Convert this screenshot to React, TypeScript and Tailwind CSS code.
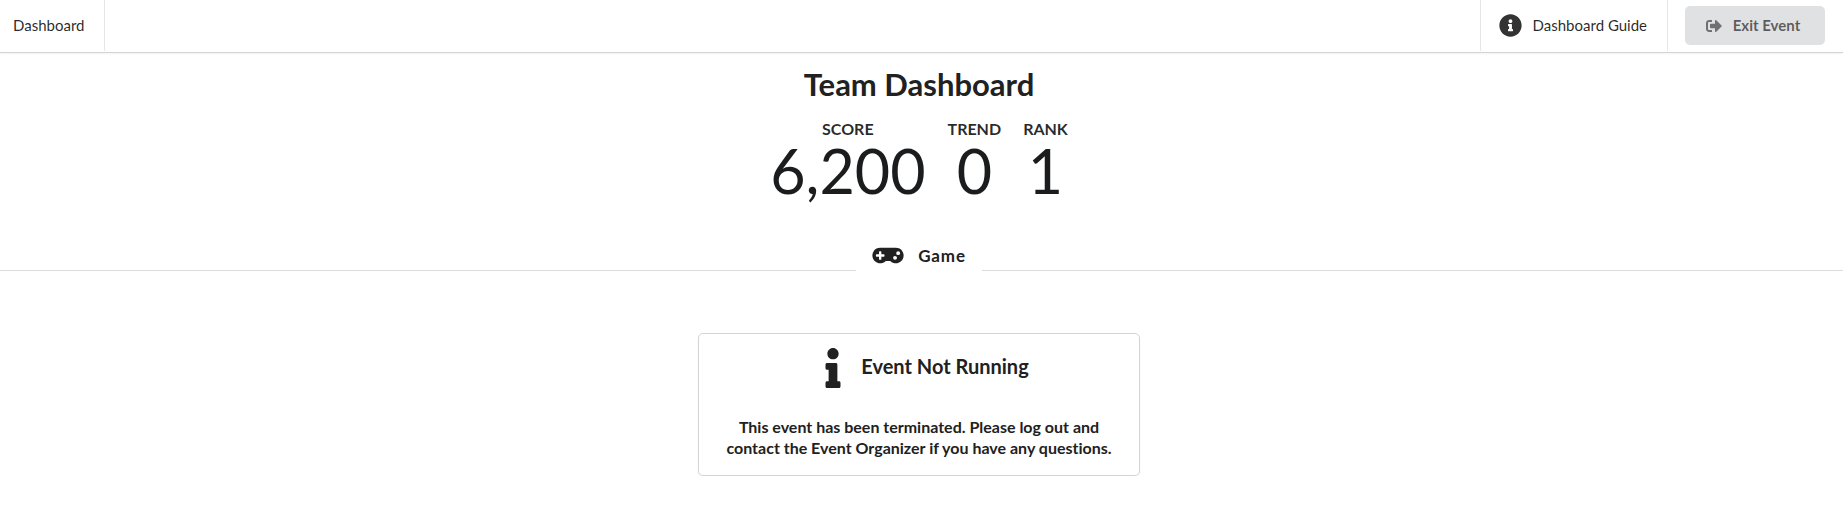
import type { ReactNode } from "react";
import { FaGamepad, FaInfo, FaInfoCircle, FaSignOutAlt } from "react-icons/fa";

function Statistic({ label, value }: { label: string; value: ReactNode }) {
  return (
    <div className="flex flex-col items-center">
      <dt className="text-base leading-5 font-bold text-[#1b1c1d]/95 uppercase">{label}</dt>
      <dd className="text-[61px] leading-16 text-[#1b1c1d]">{value}</dd>
    </div>
  );
}

function TopBar() {
  return (
    <nav className="flex h-[53px] border-b border-[#d4d4d5] text-[15px] text-black/85 shadow-xs">
      <a href="#dashboard" className="mb-px flex items-center border-r border-[#e6e6e6] pr-5 pl-[13px]">
        Dashboard
      </a>
      <div className="ml-auto flex">
        <a href="#guide" className="mb-px flex items-center gap-[11px] border-x border-[#e6e6e6] pr-5 pl-[18px]">
          <FaInfoCircle className="size-[23px] text-[#333333]" aria-hidden="true" />
          Dashboard Guide
        </a>
        <div className="flex items-center pr-[18px] pl-[17px]">
          <button
            type="button"
            className="mb-px flex h-[39px] w-[140px] items-center justify-center gap-[11px] rounded-[5px] bg-[#e0e1e2] pr-1 font-bold text-black/60"
          >
            <FaSignOutAlt className="size-4 text-black/50" aria-hidden="true" />
            Exit Event
          </button>
        </div>
      </div>
    </nav>
  );
}

export default function App() {
  return (
    <div className="bg-white font-['Lato',sans-serif] text-[#212121] [font-variant-ligatures:none]">
      <TopBar />
      <main className="flex flex-col items-center pr-[5px]">
        <h1 className="mt-[11px] text-[31px] leading-10 font-bold">Team Dashboard</h1>
        <dl className="mt-[15px] flex gap-[22px]">
          <Statistic label="Score" value="6,200" />
          <Statistic label="Trend" value="0" />
          <Statistic label="Rank" value="1" />
        </dl>
        <div className="mt-10 -mr-[5px] flex items-end self-stretch">
          <div className="grow basis-0 border-b border-[#dcdcdd]" />
          <h2 className="flex items-center gap-[14px] px-4 pb-[3px] text-[17px] leading-6 font-bold tracking-wider">
            <FaGamepad className="h-[25px] w-8" aria-hidden="true" />
            Game
          </h2>
          <div className="grow basis-[5px] border-b border-[#dcdcdd]" />
        </div>
        <section className="mt-[62px] w-[442px] rounded-[5px] border border-[#d4d4d5] px-5 pt-[14px] pb-[17px] text-center shadow-xs">
          <h3 className="flex items-center justify-center gap-2 pl-1 text-xl leading-9 font-bold">
            <FaInfo className="size-10" aria-hidden="true" />
            <span className="pb-1">Event Not Running</span>
          </h3>
          <p className="mt-7 text-base leading-[21px] font-bold">
            This event has been terminated. Please log out and contact the Event Organizer if you have any questions.
          </p>
        </section>
      </main>
    </div>
  );
}
